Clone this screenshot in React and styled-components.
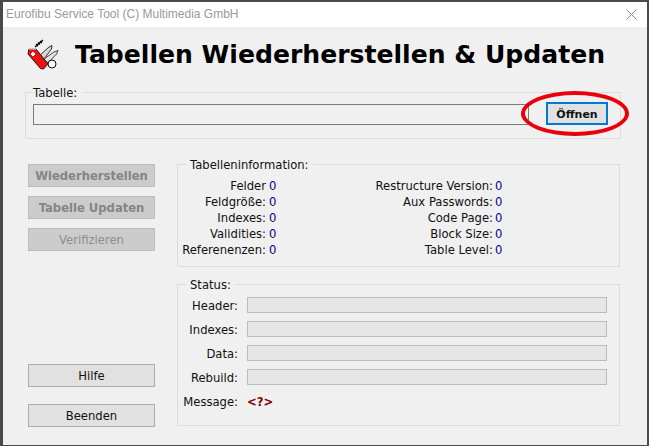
import React from "react";
import styled, { createGlobalStyle } from "styled-components";

const Global = createGlobalStyle`
  html, body { margin: 0; padding: 0; background: #4a4a4a; }
  * { box-sizing: border-box; }
`;

const Screen = styled.div`
  width: 649px;
  height: 446px;
  padding: 2px 0 0 3px;
  background: #4a4a4a;
  overflow: hidden;
`;

const Window = styled.div`
  position: relative;
  width: 644px;
  height: 443px;
  background: #f0f0f0;
  font-family: "DejaVu Sans", Tahoma, sans-serif;
  font-size: 11.6px;
  color: #111;
  display: flex;
  flex-direction: column;
`;

const TitleBar = styled.div`
  height: 25px;
  background: #fff;
  display: flex;
  align-items: center;
  justify-content: space-between;
  padding: 0 10px 0 3px;
  color: #9a9a9a;
  font-family: "Liberation Sans", sans-serif;
  font-size: 12px;
`;

const TitleText = styled.span`
  margin-bottom: 2px;
`;

const Body = styled.div`
  flex: 1;
  padding: 0 0 0 22px;
  display: flex;
  flex-direction: column;
`;

const Header = styled.div`
  height: 58px;
  padding: 0 0 3px 2px;
  display: flex;
  align-items: center;
  gap: 16px;
`;

const Heading = styled.h1`
  margin: 0;
  font-family: "DejaVu Sans", sans-serif;
  font-weight: 700;
  font-size: 25.1px;
  color: #000;
  white-space: nowrap;
`;

const Group = styled.fieldset`
  margin: 0;
  padding: ${(p) => p.$padding};
  border: 1px solid #dcdcdc;
  min-width: 0;
  height: ${(p) => p.$height}px;
  width: ${(p) => p.$width}px;
`;

const Legend = styled.legend`
  padding: 2px ${(p) => p.$side ?? 4}px 0 ${(p) => p.$start ?? 4}px;
  margin-left: ${(p) => p.$indent ?? 3}px;
  line-height: 13px;
`;

const FileRow = styled.div`
  display: flex;
  align-items: flex-end;
  margin-top: 2px;
`;

const FileInput = styled.div`
  width: 496px;
  height: 21px;
  border: 1px solid #7a7a7a;
  background: #f0f0f0;
`;

const OpenButton = styled.button`
  width: 62px;
  height: 23px;
  margin-left: 17px;
  border: 2px solid #0078d7;
  background: #e1e1e1;
  font-family: "DejaVu Sans", sans-serif;
  font-size: 11px;
  font-weight: 700;
  color: #111;
  padding: 1px 0 0;
`;

const Columns = styled.div`
  display: flex;
  margin-top: 18px;
`;

const Side = styled.div`
  width: 127px;
  height: 270px;
  margin: 0 22px 0 3px;
  padding-top: 7px;
  display: flex;
  flex-direction: column;
`;

const ActionButton = styled.button`
  width: 127px;
  height: 23px;
  flex: none;
  margin-bottom: ${(p) => p.$gap ?? 9}px;
  border: 1px solid ${(p) => (p.$off ? "#bdbdbd" : "#adadad")};
  background: ${(p) => (p.$off ? "#cccccc" : "#e1e1e1")};
  color: ${(p) => (p.$off ? (p.$bold ? "#858585" : "#8e8e8e") : "#111")};
  font-family: "DejaVu Sans", sans-serif;
  font-size: 11.6px;
  font-weight: ${(p) => (p.$bold ? 700 : 400)};
  padding: 1px 0 0;
`;

const Spacer = styled.div`
  flex: 1;
`;

const Panels = styled.div`
  width: 443px;
  display: flex;
  flex-direction: column;
  gap: 10px;
`;

const InfoGrid = styled.div`
  display: grid;
  grid-template-columns: 95px 190px;
  margin-top: 6px;
`;

const InfoColumn = styled.div`
  display: grid;
  grid-template-columns: ${(p) => p.$label}px auto;
  grid-auto-rows: 16px;
  align-items: center;
  column-gap: ${(p) => p.$gap}px;
`;

const InfoLabel = styled.span`
  text-align: right;
  white-space: nowrap;
`;

const InfoValue = styled.span`
  color: #000080;
`;

const StatusRows = styled.div`
  display: grid;
  grid-template-columns: 60px 360px;
  grid-auto-rows: 24px;
  align-items: center;
  column-gap: 9px;
  margin-top: 1px;
`;

const StatusLabel = styled.span`
  text-align: right;
  white-space: nowrap;
  padding-top: 2px;
`;

const Bar = styled.div`
  height: 16px;
  border: 1px solid #bcbcbc;
  background: #e6e6e6;
`;

const Message = styled.span`
  color: #800000;
  font-weight: 700;
  padding-top: 2px;
`;

const MarkerRing = styled.div`
  position: absolute;
  left: 518px;
  top: 89px;
  width: 108px;
  height: 45px;
  border: 4px solid #e8000b;
  border-radius: 50%;
  pointer-events: none;
`;

const KnifeFrame = styled.svg`
  flex: none;
`;

const CloseIcon = () => (
  <svg width="11" height="11" viewBox="0 0 11 11">
    <path d="M0.5 0.5 L10.5 10.5 M10.5 0.5 L0.5 10.5" stroke="#8a8a8a" strokeWidth="1" fill="none" />
  </svg>
);

const KnifeIcon = () => (
  <KnifeFrame width="32" height="32" viewBox="0 0 32 32">
    <path d="M8 8 L16 1 M9 5 L11 7 M11 3.5 L13 5.5 M13 2 L15 4" stroke="#000" strokeWidth="1.2" fill="none" />
    <path d="M12 17 L22 8 L25 6.5 L24.5 10 L17 20 Z" fill="#d6d6d6" stroke="#333" strokeWidth="1" />
    <path d="M17 20 L27 13 L31 11.5 L29.5 15 L21 24 Z" fill="#e4e4e4" stroke="#444" strokeWidth="1" />
    <circle cx="25" cy="25" r="4" fill="#f6f6f6" stroke="#111" strokeWidth="1" />
    <path d="M2 10 L9 10 L21 25 L16.5 30 L13.5 29.5 L1 15 Z" fill="#f01010" stroke="#1a1a1a" strokeWidth="1" />
    <path d="M2 10 L9 10" stroke="#fff" strokeWidth="1" fill="none" />
    <path d="M5 13 h2 v1 h1 v2 h-1 v1 h-2 v-1 h-1 v-2 h1 Z" fill="#fff" />
  </KnifeFrame>
);

const leftInfo = [
  ["Felder", 0],
  ["Feldgröße:", 0],
  ["Indexes:", 0],
  ["Validities:", 0],
  ["Referenenzen:", 0],
];

const rightInfo = [
  ["Restructure Version:", 0],
  ["Aux Passwords:", 0],
  ["Code Page:", 0],
  ["Block Size:", 0],
  ["Table Level:", 0],
];

const statusRows = ["Header:", "Indexes:", "Data:", "Rebuild:"];

export default function App() {
  return (
    <Screen>
      <Global />
      <Window>
        <TitleBar>
          <TitleText>Eurofibu Service Tool (C) Multimedia GmbH</TitleText>
          <CloseIcon />
        </TitleBar>
        <Body>
          <Header>
            <KnifeIcon />
            <Heading>Tabellen Wiederherstellen &amp; Updaten</Heading>
          </Header>
          <Group $width="596" $height="54" $padding="0 7px">
            <Legend $indent={0} $start={0} $side={6}>Tabelle:</Legend>
            <FileRow>
              <FileInput />
              <OpenButton>Öffnen</OpenButton>
            </FileRow>
          </Group>
          <Columns>
            <Side>
              <ActionButton $off $bold>Wiederherstellen</ActionButton>
              <ActionButton $off $bold>Tabelle Updaten</ActionButton>
              <ActionButton $off>Verifizieren</ActionButton>
              <Spacer />
              <ActionButton $gap={17}>Hilfe</ActionButton>
              <ActionButton $gap={0}>Beenden</ActionButton>
            </Side>
            <Panels>
              <Group $width="443" $height="110" $padding="0 4px">
                <Legend $indent={4}>Tabelleninformation:</Legend>
                <InfoGrid>
                  <InfoColumn $label="84" $gap="3">
                    {leftInfo.map(([label, value]) => (
                      <React.Fragment key={label}>
                        <InfoLabel>{label}</InfoLabel>
                        <InfoValue>{value}</InfoValue>
                      </React.Fragment>
                    ))}
                  </InfoColumn>
                  <InfoColumn $label="216" $gap="2">
                    {rightInfo.map(([label, value]) => (
                      <React.Fragment key={label}>
                        <InfoLabel>{label}</InfoLabel>
                        <InfoValue>{value}</InfoValue>
                      </React.Fragment>
                    ))}
                  </InfoColumn>
                </InfoGrid>
              </Group>
              <Group $width="443" $height="149" $padding="0">
                <Legend $indent={8}>Status:</Legend>
                <StatusRows>
                  {statusRows.map((label) => (
                    <React.Fragment key={label}>
                      <StatusLabel>{label}</StatusLabel>
                      <Bar />
                    </React.Fragment>
                  ))}
                  <StatusLabel>Message:</StatusLabel>
                  <Message>&lt;?&gt;</Message>
                </StatusRows>
              </Group>
            </Panels>
          </Columns>
        </Body>
        <MarkerRing />
      </Window>
    </Screen>
  );
}
